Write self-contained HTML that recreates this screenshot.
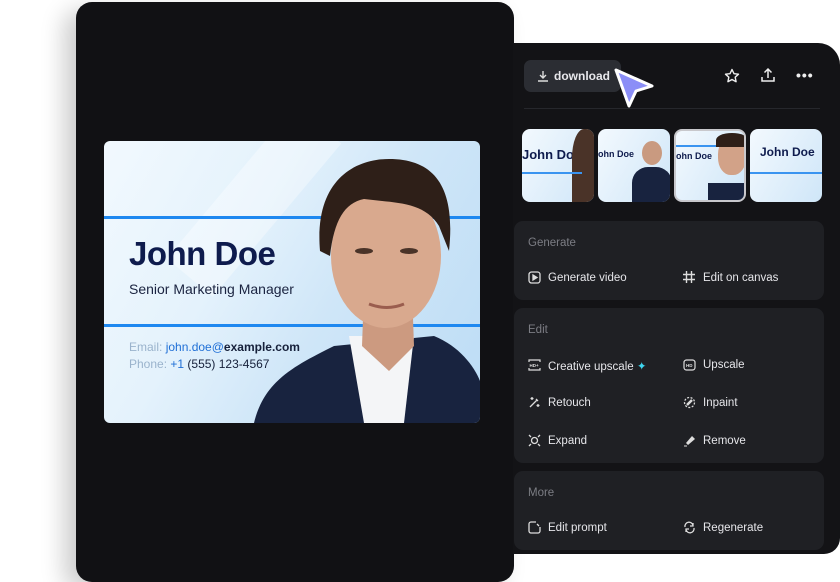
<!DOCTYPE html>
<html><head><style>
*{margin:0;padding:0;box-sizing:border-box}
body{width:840px;height:560px;background:#fff;position:relative;overflow:hidden;font-family:"Liberation Sans",sans-serif}
.lp{position:absolute;left:76px;top:2px;width:438px;height:580px;background:#111114;border-radius:16px;box-shadow:-12px 8px 24px rgba(0,0,0,.2)}
.rp{position:absolute;left:513px;top:43px;width:327px;height:511px;background:#131316;border-radius:0 22px 16px 0}
.card{position:absolute;left:104px;top:141px;width:376px;height:282px;border-radius:6px;overflow:hidden;background:linear-gradient(120deg,#f2f9fe 0%,#e4f2fc 35%,#cfe6f8 60%,#bcdcf5 100%)}
.sec{position:absolute;left:514px;width:310px;background:#1f2024;border-radius:9px}
.t{position:absolute;color:#e6e6ea;font-size:11.5px}
.h{position:absolute;color:#7c7d84;font-size:11.5px}
svg.i{position:absolute}
.th{position:absolute;top:129px;width:72px;height:73px;border-radius:8px;overflow:hidden;background:linear-gradient(120deg,#f3f9fe,#cfe6f8)}
</style></head><body>
<div class="lp"></div>
<div class="rp"></div>
<div class="card">
 <div style="position:absolute;left:120px;top:-40px;width:60px;height:200px;background:rgba(255,255,255,.35);transform:rotate(40deg)"></div>
 <div style="position:absolute;left:0;top:75px;width:376px;height:3px;background:#1e88f0"></div>
 <div style="position:absolute;left:0;top:183px;width:376px;height:3px;background:#1e88f0"></div>
 <div style="position:absolute;left:25px;top:94px;font-size:33px;font-weight:bold;color:#0e1b4d;letter-spacing:-.5px">John Doe</div>
 <div style="position:absolute;left:25px;top:140px;font-size:14px;color:#1a2340">Senior Marketing Manager</div>
 <div style="position:absolute;left:25px;top:199px;font-size:12px;color:#9ab3cc">Email: <span style="color:#1f6fd6">john.doe@</span><span style="color:#16203a;font-weight:bold">example.com</span></div>
 <div style="position:absolute;left:25px;top:216px;font-size:12px;color:#9ab3cc">Phone: <span style="color:#1f6fd6">+1</span> <span style="color:#16203a">(555) 123-4567</span></div>
 <svg style="position:absolute;left:140px;top:0" width="236" height="282">
  <path d="M10 282 C20 240 50 225 90 205 L190 195 C215 205 230 225 236 240 L236 282Z" fill="#18233f"/>
  <path d="M105 195 L170 195 L160 282 L120 282Z" fill="#f4f5f7"/>
  <path d="M120 150 L168 150 L170 205 L145 230 L118 205Z" fill="#cc9a80"/>
  <ellipse cx="142" cy="115" rx="55" ry="72" fill="#d9a98e"/>
  <path d="M76 110 C70 40 110 18 145 18 C190 18 212 45 205 110 L195 85 C180 60 150 62 120 58 C100 62 90 80 86 115Z" fill="#2e1f18"/>
  <ellipse cx="120" cy="110" rx="9" ry="3" fill="#4a3328"/><ellipse cx="165" cy="110" rx="9" ry="3" fill="#4a3328"/>
  <path d="M125 163 Q143 170 160 163" stroke="#9a5d4e" stroke-width="3" fill="none"/>
 </svg>
</div>
<div style="position:absolute;left:524px;top:60px;width:97px;height:32px;background:#2b2d33;border-radius:7px"></div>
<svg class="i" style="left:537px;top:70px" width="12" height="12" viewBox="0 0 12 12" fill="none" stroke="#ddd" stroke-width="1.4"><path d="M6 1v7M3 5l3 3 3-3M1 11h10"/></svg>
<div style="position:absolute;left:554px;top:69px;font-size:12px;font-weight:bold;color:#e8e8ec">download</div>
<svg class="i" style="left:610px;top:64px" width="50" height="50" viewBox="0 0 50 50"><path d="M6 6 L42 22 L26 27 L19 42Z" fill="#8b8ef7" stroke="#fff" stroke-width="3" stroke-linejoin="round"/></svg>
<svg class="i" style="left:724px;top:68px" width="16" height="16" viewBox="0 0 16 16" fill="none" stroke="#eee" stroke-width="1.4"><path d="M8 1.5l2 4.2 4.5.5-3.3 3 .9 4.5L8 11.5 3.9 13.7l.9-4.5-3.3-3 4.5-.5z" stroke-linejoin="round"/></svg>
<svg class="i" style="left:760px;top:67px" width="16" height="16" viewBox="0 0 16 16" fill="none" stroke="#eee" stroke-width="1.5"><path d="M8 11V2M4.5 5.5L8 2l3.5 3.5M2 10v4h12v-4"/></svg>
<div style="position:absolute;left:796px;top:67px;color:#eee;font-size:14px;font-weight:bold;letter-spacing:1px">•••</div>
<div style="position:absolute;left:524px;top:108px;width:296px;height:1px;background:#26272c"></div>
<div class="th" style="left:522px"><div style="position:absolute;left:0;top:18px;font-size:13px;font-weight:bold;color:#0e1b4d">John Doe</div><div style="position:absolute;left:50px;top:0;width:30px;height:73px;background:#4a3328;border-radius:40% 0 0 0"></div><div style="position:absolute;left:0;top:43px;width:60px;height:2px;background:#3a94f0"></div></div>
<div class="th" style="left:598px"><div style="position:absolute;left:0;top:20px;font-size:9px;font-weight:bold;color:#0e1b4d">ohn Doe</div><div style="position:absolute;left:44px;top:12px;width:20px;height:24px;background:#c99a80;border-radius:50%"></div><div style="position:absolute;left:34px;top:38px;width:40px;height:40px;background:#18233f;border-radius:40% 40% 0 0"></div></div>
<div class="th" style="left:674px;border:2px solid #c8c8cc"><div style="position:absolute;left:0;top:20px;font-size:9px;font-weight:bold;color:#0e1b4d">ohn Doe</div><div style="position:absolute;left:0;top:14px;width:70px;height:2px;background:#3a94f0"></div><div style="position:absolute;left:42px;top:6px;width:28px;height:38px;background:#d2a288;border-radius:45%"></div><div style="position:absolute;left:40px;top:2px;width:32px;height:14px;background:#2e1f18;border-radius:50% 50% 0 0"></div><div style="position:absolute;left:32px;top:52px;width:40px;height:30px;background:#18233f"></div></div>
<div class="th" style="left:750px"><div style="position:absolute;left:10px;top:16px;font-size:12px;font-weight:bold;color:#0e1b4d">John Doe</div><div style="position:absolute;left:0;top:43px;width:72px;height:2px;background:#3a94f0"></div></div>
<div class="sec" style="top:221px;height:79px"></div>
<div class="h" style="left:528px;top:237px">Generate</div>
<svg class="i" style="left:528px;top:271px" width="13" height="13" viewBox="0 0 13 13" fill="none" stroke="#ddd" stroke-width="1.3"><rect x="1" y="1" width="11" height="11" rx="2.5"/><path d="M5 4v5l4-2.5z" fill="#ddd"/></svg>
<div class="t" style="left:548px;top:272px">Generate video</div>
<svg class="i" style="left:683px;top:271px" width="12" height="12" viewBox="0 0 12 12" fill="none" stroke="#ddd" stroke-width="1.4"><path d="M3.5 0v12M8.5 0v12M0 3.5h12M0 8.5h12"/></svg>
<div class="t" style="left:703px;top:272px">Edit on canvas</div>
<div class="sec" style="top:308px;height:155px"></div>
<div class="h" style="left:528px;top:324px">Edit</div>
<svg class="i" style="left:528px;top:359px" width="13" height="12" viewBox="0 0 13 12" fill="none" stroke="#ddd" stroke-width="1.2"><path d="M1 3V1h11v2M1 9v2h11V9"/><text x="1.5" y="8" font-size="4.5" fill="#ddd" stroke="none" font-family="Liberation Sans" font-weight="bold">HD+</text></svg>
<div class="t" style="left:548px;top:359px">Creative upscale <span style="color:#3fd6f0">✦</span></div>
<svg class="i" style="left:683px;top:359px" width="13" height="12" viewBox="0 0 13 12" fill="none" stroke="#ddd" stroke-width="1.2"><rect x="1" y="1" width="11" height="10" rx="2.5"/><text x="3" y="8" font-size="4.5" fill="#ddd" stroke="none" font-family="Liberation Sans" font-weight="bold">HD</text></svg>
<div class="t" style="left:703px;top:359px">Upscale</div>
<svg class="i" style="left:528px;top:396px" width="13" height="13" viewBox="0 0 13 13" fill="none" stroke="#ddd" stroke-width="1.3"><path d="M2 11L9 4M8 3l2 2M4 1v3M2.5 2.5h3M10 8v3M8.5 9.5h3"/></svg>
<div class="t" style="left:548px;top:397px">Retouch</div>
<svg class="i" style="left:683px;top:396px" width="13" height="13" viewBox="0 0 13 13" fill="none" stroke="#ddd" stroke-width="1.3" stroke-dasharray="2 1.5"><circle cx="6.5" cy="6.5" r="5"/><path d="M4 9l5-5" stroke-dasharray="none" stroke-width="2.5"/></svg>
<div class="t" style="left:703px;top:397px">Inpaint</div>
<svg class="i" style="left:528px;top:434px" width="13" height="13" viewBox="0 0 13 13" fill="none" stroke="#ddd" stroke-width="1.3"><circle cx="6.5" cy="6.5" r="3"/><path d="M1 1l2 2M12 1l-2 2M1 12l2-2M12 12l-2-2"/></svg>
<div class="t" style="left:548px;top:435px">Expand</div>
<svg class="i" style="left:683px;top:434px" width="13" height="13" viewBox="0 0 13 13"><path d="M3 9l6-7 3 3-7 6z" fill="#ddd"/><path d="M1 12h3" stroke="#ddd"/></svg>
<div class="t" style="left:703px;top:435px">Remove</div>
<div class="sec" style="top:471px;height:79px"></div>
<div class="h" style="left:528px;top:487px">More</div>
<svg class="i" style="left:528px;top:521px" width="13" height="13" viewBox="0 0 13 13" fill="none" stroke="#ddd" stroke-width="1.3"><path d="M12 6v4a2 2 0 0 1-2 2H3a2 2 0 0 1-2-2V3a2 2 0 0 1 2-2h5M9 3l2 2"/></svg>
<div class="t" style="left:548px;top:522px">Edit prompt</div>
<svg class="i" style="left:683px;top:521px" width="13" height="13" viewBox="0 0 13 13" fill="none" stroke="#ddd" stroke-width="1.3"><path d="M2 6a4 4 0 0 1 8-1.5M11 7a4 4 0 0 1-8 1.5M10 2v3H7M3 11V8h3"/></svg>
<div class="t" style="left:703px;top:522px">Regenerate</div>
</body></html>
